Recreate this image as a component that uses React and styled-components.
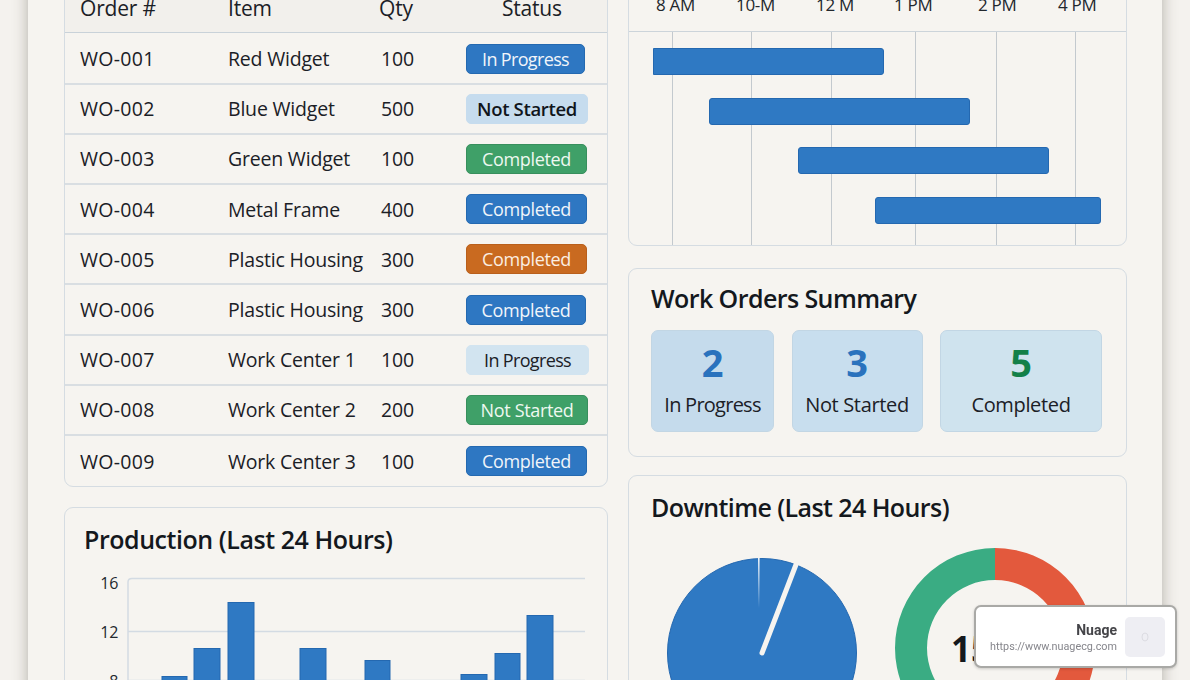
import React from "react";
import styled, { createGlobalStyle } from "styled-components";

const Global = createGlobalStyle`
  html, body { margin: 0; padding: 0; height: 680px; overflow: hidden; background: #f4f2ee; }
  * { box-sizing: border-box; }
  #root { height: 680px; overflow: hidden; font-family: "Open Sans", "Noto Sans", sans-serif; color: #1b2026; }
`;

const Page = styled.div`
  height: 680px;
  overflow: hidden;
  padding: 0 28px;
`;
const Sheet = styled.main`
  width: 1134px;
  min-height: 1100px;
  margin-top: -21px;
  padding: 0 35px 0 36px;
  background: #f6f4f0;
  box-shadow: 0 0 14px rgba(70, 65, 55, 0.38);
  display: grid;
  grid-template-columns: 544px 499px;
  column-gap: 20px;
  align-items: start;
`;
const Column = styled.div`
  display: flex;
  flex-direction: column;
`;
const Panel = styled.section`
  background: #f6f4f0;
  border: 1.5px solid #d5dce2;
  border-radius: 9px;
  overflow: hidden;
  margin-top: ${p => p.$top || 0}px;
  height: ${p => p.$height ? `${p.$height}px` : "auto"};
`;
const Title = styled.h2`
  margin: 0;
  font-size: 25px;
  line-height: 34px;
  font-weight: 600;
  letter-spacing: ${p => p.$spacing ?? -0.58}px;
  color: #14181d;
`;

const HeadRow = styled.div`
  height: 53px;
  padding: 9px 0 0 15px;
  display: grid;
  grid-template-columns: 148px 151px 87px 1fr;
  background: #f2f0ec;
  border-bottom: 1.5px solid #c9d2d9;
  font-size: 21px;
  line-height: 38px;
  font-weight: 500;
  letter-spacing: -0.2px;
`;
const StatusHead = styled.span`
  padding-left: 36px;
`;
const TableBody = styled.div`
  padding-top: 1.5px;
`;
const Row = styled.div`
  height: 50.2px;
  padding-left: 15px;
  display: grid;
  grid-template-columns: 148px 153px 85px 1fr;
  align-items: center;
  font-size: 19.5px;
  letter-spacing: -0.2px;
  border-bottom: 2px solid #d9dee2;
  &:last-child { border-bottom: 0; }
`;
const OrderCell = styled.span`
  letter-spacing: 0.3px;
`;
const palette = {
  blue: ["#2e77c2", "#f1f5fa", "#2469b0"],
  light: ["#c6dcee", "#10151b", "#c6dcee"],
  pale: ["#d2e4f0", "#1b2026", "#d2e4f0"],
  green: ["#3fa068", "#eef8f0", "#388f5d"],
  orange: ["#c96a20", "#fbeee2", "#b95f1b"],
};
const Badge = styled.span`
  width: ${p => p.$w}px;
  height: 30px;
  border-radius: 5px;
  display: flex;
  align-items: center;
  justify-content: center;
  font-size: ${p => p.$bold ? 18.5 : 18}px;
  letter-spacing: ${p => p.$tight ? -0.65 : -0.35}px;
  font-weight: ${p => p.$bold ? 600 : 400};
  background: ${p => palette[p.$tone][0]};
  color: ${p => palette[p.$tone][1]};
  border: 1px solid ${p => palette[p.$tone][2]};
`;

const GanttHead = styled.div`
  height: 52px;
  border-bottom: 1.5px solid #ccd4da;
  position: relative;
`;
const TimeLabel = styled.span`
  position: absolute;
  top: 10px;
  left: ${p => p.$x}px;
  font-size: 17px;
  line-height: 30px;
  letter-spacing: -0.3px;
  color: #22272d;
`;
const GanttBody = styled.div`
  position: relative;
  height: 213px;
  padding-top: 16px;
  display: flex;
  flex-direction: column;
  gap: 22.6px;
`;
const GridLine = styled.i`
  position: absolute;
  top: 0;
  bottom: 0;
  left: ${p => p.$x}px;
  width: 1px;
  background: #c3c9ce;
`;
const Bar = styled.div`
  position: relative;
  height: 27px;
  background: #2f79c3;
  border: 1px solid #2468b0;
  border-radius: ${p => p.$square ? "0 3px 3px 0" : "3px"};
  margin-left: ${p => p.$x}px;
  width: ${p => p.$w}px;
`;

const SummaryInner = styled.div`
  padding: 12px 22px 0;
`;
const Tiles = styled.div`
  display: flex;
  gap: 17.5px;
  margin-top: 15px;
`;
const Tile = styled.div`
  width: ${p => p.$w}px;
  height: 102px;
  border-radius: 7px;
  background: ${p => p.$bg};
  border: 1px solid #c2d6e4;
  display: flex;
  flex-direction: column;
  align-items: center;
  padding-top: 7px;
`;
const TileNum = styled.div`
  font-size: 38px;
  line-height: 48px;
  font-weight: 700;
  color: ${p => p.$color};
`;
const TileLabel = styled.div`
  font-size: 20px;
  line-height: 28px;
  letter-spacing: ${p => p.$tight ? -0.75 : -0.35}px;
  margin-top: 5px;
`;

const DownInner = styled.div`
  padding: 14px 22px 0;
`;
const Charts = styled.div`
  display: flex;
  align-items: flex-start;
  gap: 38px;
  margin: 24px 0 0 16px;
`;
const Pie = styled.svg`
  display: block;
  flex: none;
  margin-top: 10px;
`;
const DonutWrap = styled.div`
  position: relative;
  width: 200px;
  height: 200px;
  flex: none;
`;
const DonutValue = styled.div`
  position: absolute;
  inset: 0;
  display: flex;
  align-items: center;
  justify-content: center;
  font-size: 35px;
  font-weight: 700;
  color: #14181d;
`;

const ProdInner = styled.div`
  padding: 14px 19px 0;
`;
const ProdChart = styled.div`
  position: relative;
  height: 190px;
  margin-top: 19px;
`;
const AxisLabel = styled.span`
  position: absolute;
  right: 470px;
  top: ${p => p.$y}px;
  font-size: 16px;
  line-height: 20px;
  letter-spacing: -0.3px;
  color: #23282e;
`;
const ProdSvg = styled.svg`
  display: block;
  position: absolute;
  left: 0;
  top: 0;
`;

const Toast = styled.aside`
  position: fixed;
  left: 974px;
  top: 605px;
  width: 203px;
  height: 63px;
  background: #fff;
  border: 2px solid #a9a9a6;
  border-radius: 7px;
  box-shadow: 0 1px 3px rgba(0,0,0,.18);
  display: flex;
  align-items: center;
  justify-content: flex-end;
  gap: 8px;
  padding-right: 10px;
  font-family: Roboto, "Liberation Sans", sans-serif;
`;
const ToastText = styled.div`
  text-align: right;
  padding-top: 2px;
`;
const ToastName = styled.div`
  font-size: 14px;
  line-height: 18px;
  font-weight: 700;
  color: #454549;
`;
const ToastUrl = styled.div`
  font-size: 10.8px;
  line-height: 15px;
  color: #85858b;
`;
const ToastIcon = styled.div`
  width: 40px;
  height: 40px;
  border-radius: 5px;
  background: #eeeef3;
  display: flex;
  align-items: center;
  justify-content: center;
`;

const rows = [
  ["WO-001", "Red Widget", 100, "In Progress", "blue", 119],
  ["WO-002", "Blue Widget", 500, "Not Started", "light", 122, true],
  ["WO-003", "Green Widget", 100, "Completed", "green", 121],
  ["WO-004", "Metal Frame", 400, "Completed", "blue", 121],
  ["WO-005", "Plastic Housing", 300, "Completed", "orange", 121],
  ["WO-006", "Plastic Housing", 300, "Completed", "blue", 120],
  ["WO-007", "Work Center 1", 100, "In Progress", "pale", 123],
  ["WO-008", "Work Center 2", 200, "Not Started", "green", 122],
  ["WO-009", "Work Center 3", 100, "Completed", "blue", 121],
];
const times = [["8 AM", 27], ["10-M", 107], ["12 M", 187], ["1 PM", 265], ["2 PM", 349], ["4 PM", 429]];
const lines = [43, 122, 202, 286, 367, 446];
const bars = [[24, 231, true], [80, 261], [169, 251], [246, 226]];
const prodBars = [[78, 25, 676], [110, 26, 648], [144, 26, 602], [216, 26, 648], [281, 25, 660], [377, 26, 674], [411, 25, 653], [443, 26, 615]];

export default function App() {
  return (
    <Page>
      <Global />
      <Sheet>
        <Column>
          <Panel>
            <HeadRow>
              <span>Order #</span>
              <span>Item</span>
              <span>Qty</span>
              <StatusHead>Status</StatusHead>
            </HeadRow>
            <TableBody>
              {rows.map(r => (
                <Row key={r[0]}>
                  <OrderCell>{r[0]}</OrderCell>
                  <span>{r[1]}</span>
                  <span>{r[2]}</span>
                  <Badge $tone={r[4]} $w={r[5]} $bold={r[6]} $tight={r[3] === "In Progress"}>{r[3]}</Badge>
                </Row>
              ))}
            </TableBody>
          </Panel>
          <Panel $top={20} $height={300}>
            <ProdInner>
              <Title $spacing={-0.45}>Production (Last 24 Hours)</Title>
              <ProdChart>
                <ProdSvg width="503" height="190" viewBox="0 0 503 190">
                  <path d="M44 190V7Q44 3.5 48 3.5H501" fill="none" stroke="#d3dbe3" strokeWidth="1.5" />
                  <path d="M44 56.5H501M44 105.5H501" fill="none" stroke="#d3dbe3" strokeWidth="1.5" />
                  {prodBars.map(([x, w, top]) => (
                    <rect key={x} x={x} y={top - 574.5} width={w} height={190} fill="#2f79c3" stroke="#2468b0" strokeWidth="1" />
                  ))}
                </ProdSvg>
                <AxisLabel $y={-2}>16</AxisLabel>
                <AxisLabel $y={47}>12</AxisLabel>
                <AxisLabel $y={96}>8</AxisLabel>
              </ProdChart>
            </ProdInner>
          </Panel>
        </Column>
        <Column>
          <Panel $height={267}>
            <GanttHead>
              {times.map(([t, x]) => <TimeLabel key={t} $x={x}>{t}</TimeLabel>)}
            </GanttHead>
            <GanttBody>
              {lines.map(x => <GridLine key={x} $x={x} />)}
              {bars.map(([x, w, sq]) => <Bar key={x} $x={x} $w={w} $square={sq} />)}
            </GanttBody>
          </Panel>
          <Panel $top={22} $height={189}>
            <SummaryInner>
              <Title>Work Orders Summary</Title>
              <Tiles>
                <Tile $w={123} $bg="#c5dbec"><TileNum $color="#2a72bd">2</TileNum><TileLabel $tight>In Progress</TileLabel></Tile>
                <Tile $w={131} $bg="#c8deee"><TileNum $color="#2a72bd">3</TileNum><TileLabel>Not Started</TileLabel></Tile>
                <Tile $w={162} $bg="#cfe3ee"><TileNum $color="#138048">5</TileNum><TileLabel>Completed</TileLabel></Tile>
              </Tiles>
            </SummaryInner>
          </Panel>
          <Panel $top={18} $height={300}>
            <DownInner>
              <Title>Downtime (Last 24 Hours)</Title>
              <Charts>
                <Pie width="190" height="190" viewBox="0 0 190 190">
                  <defs>
                    <linearGradient id="seam" x1="0" y1="0" x2="0" y2="1">
                      <stop offset="0" stopColor="#eef3f8" />
                      <stop offset="1" stopColor="#2f79c3" />
                    </linearGradient>
                  </defs>
                  <circle cx="95" cy="95" r="94.5" fill="#2f79c3" stroke="#2468b0" strokeWidth="1" />
                  <path d="M95 95L130 4" stroke="#f6f4f0" strokeWidth="5" strokeLinecap="round" />
                  <rect x="91" y="0" width="1.6" height="50" fill="url(#seam)" />
                </Pie>
                <DonutWrap>
                  <svg width="200" height="200" viewBox="0 0 200 200">
                    <path d="M100 0A100 100 0 0 0 100 200V168A68 68 0 0 1 100 32Z" fill="#3aac83" />
                    <path d="M100 0A100 100 0 0 1 100 200V168A68 68 0 0 0 100 32Z" fill="#e3593d" />
                  </svg>
                  <DonutValue>15 hr</DonutValue>
                </DonutWrap>
              </Charts>
            </DownInner>
          </Panel>
        </Column>
      </Sheet>
      <Toast>
        <ToastText>
          <ToastName>Nuage</ToastName>
          <ToastUrl>https://www.nuagecg.com</ToastUrl>
        </ToastText>
        <ToastIcon>
          <svg width="8" height="10" viewBox="0 0 8 10"><ellipse cx="4" cy="5" rx="3" ry="4" fill="none" stroke="#dcdce2" strokeWidth="1" /></svg>
        </ToastIcon>
      </Toast>
    </Page>
  );
}
